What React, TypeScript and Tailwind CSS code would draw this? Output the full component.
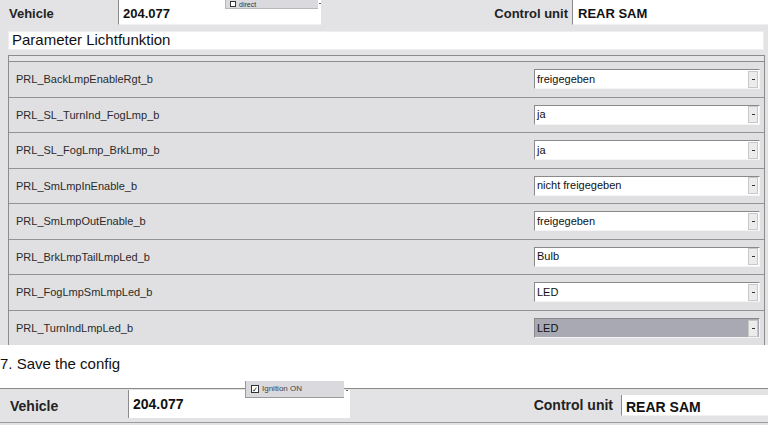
import React from "react";

const rows: { label: string; value: string; hl?: boolean }[] = [
  { label: "PRL_BackLmpEnableRgt_b", value: "freigegeben" },
  { label: "PRL_SL_TurnInd_FogLmp_b", value: "ja" },
  { label: "PRL_SL_FogLmp_BrkLmp_b", value: "ja" },
  { label: "PRL_SmLmpInEnable_b", value: "nicht freigegeben" },
  { label: "PRL_SmLmpOutEnable_b", value: "freigegeben" },
  { label: "PRL_BrkLmpTailLmpLed_b", value: "Bulb" },
  { label: "PRL_FogLmpSmLmpLed_b", value: "LED" },
  { label: "PRL_TurnIndLmpLed_b", value: "LED", hl: true },
];

function Select({ value, hl }: { value: string; hl?: boolean }) {
  return (
    <div
      className={`flex h-[20px] w-[226px] items-center border-t border-l border-t-[#8a8a8a] border-l-[#8a8a8a] border-b border-r border-b-[#f4f4f4] border-r-[#f4f4f4] ${
        hl ? "bg-[#a9a9b3]" : "bg-white"
      }`}
    >
      <span className="flex-1 truncate pl-[2px] text-[11px] leading-none text-[#111]">{value}</span>
      <div className="mr-[1px] flex h-[17px] w-[10px] items-center justify-center border border-[#c8c8c8] bg-[#ececec]">
        <div className="h-[1px] w-[3px] bg-[#333]" />
      </div>
    </div>
  );
}

export default function App() {
  return (
    <div
      className="relative h-[425px] w-[768px] overflow-hidden bg-white"
      style={{ fontFamily: '"Liberation Sans", Arial, sans-serif' }}
    >
      {/* Top screenshot panel */}
      <div className="relative h-[345px] overflow-hidden bg-[#e3e3e5]">
        {/* header */}
        <div className="relative flex h-[28px] items-start">
          <div className="flex h-[25px] w-[118px] items-center pl-[9px] pt-[2px] text-[13px] font-bold text-[#222]">
            Vehicle
          </div>
          <div className="flex h-[25px] w-[203px] items-start border-l border-b border-l-[#8a8a8a] border-b-[#f0f0f0] bg-white pl-[4px] pt-[4px] text-[13px] font-bold text-[#111]">
            204.077
          </div>
          <div className="flex-1" />
          <div className="flex h-[25px] items-center pr-[4px] pt-[2px] text-[13px] font-bold text-[#222]">
            Control unit
          </div>
          <div className="flex h-[25px] w-[196px] items-start border-l border-b border-l-[#8a8a8a] border-b-[#f0f0f0] bg-white pl-[5px] pt-[4px] text-[13px] font-bold text-[#111]">
            REAR SAM
          </div>
          {/* popup */}
          <div className="absolute left-[225px] top-0 flex h-[9px] w-[93px] items-center overflow-hidden border-b border-l border-[#b8b8b8] bg-[#dadade] pl-[4px]">
            <div className="flex items-center gap-[3px]">
              <div className="h-[6px] w-[6px] border border-[#333] bg-white" />
              <span className="text-[7px] leading-[7px] text-[#333]">direct</span>
            </div>
          </div>
          <div className="absolute left-[319px] top-[3px] h-[1px] w-[2px] bg-[#666]" />
        </div>

        {/* Parameter title */}
        <div className="ml-[8px] mr-[4px] mt-[3px] flex h-[19px] items-center border border-[#eeeeee] bg-white pl-[3px] text-[15px] text-[#111]">
          Parameter Lichtfunktion
        </div>

        {/* list */}
        <div className="ml-[8px] mr-[3px] mt-[5px] border border-[#8c8c8c]">
          <div className="h-[6px] border-b border-[#8c8c8c] bg-[#e6e6e8]" />
          {rows.map((r, i) => (
            <div
              key={r.label}
              className={`flex h-[35.5px] items-center bg-[#e0e0e2] pl-[7px] pr-[4px] ${
                i < rows.length - 1 ? "border-b border-[#939393]" : ""
              }`}
            >
              <span className="flex-1 text-[11px] text-[#2a2a2a]">{r.label}</span>
              <Select value={r.value} hl={r.hl} />
            </div>
          ))}
        </div>
      </div>

      {/* caption */}
      <div className="h-[43px] pt-[10px] text-[15px] leading-[17px] text-[#111]">7. Save the config</div>

      {/* second screenshot */}
      <div className="relative h-[37px] border-t border-[#8a8a8a] bg-[#e3e3e5]">
        <div className="flex h-[34px] items-start border-b border-[#9a9a9a]">
          <div className="flex h-[30px] w-[128px] items-center pl-[10px] pt-[4px] text-[14px] font-bold text-[#222]">
            Vehicle
          </div>
          <div className="mt-[1px] flex h-[28px] w-[222px] items-start border-l border-l-[#8a8a8a] bg-white pl-[4px] pt-[4px] text-[14px] font-bold text-[#111]">
            204.077
          </div>
          <div className="flex-1" />
          <div className="mt-[6px] flex h-[21px] items-center pr-[8px] text-[14px] font-bold text-[#222]">
            Control unit
          </div>
          <div className="mt-[6px] flex h-[21px] w-[147px] items-start border-l border-b border-l-[#8a8a8a] border-b-[#f0f0f0] bg-white pl-[4px] pt-[2px] text-[14px] font-bold text-[#111]">
            REAR SAM
          </div>
        </div>
      </div>
      {/* Ignition popup */}
      <div className="absolute left-[245px] top-[381px] flex h-[17px] w-[99px] items-center border-l border-b border-[#9a9a9a] bg-[#dadade] pl-[5px]">
        <div className="flex items-center gap-[3px]">
          <div className="flex h-[8px] w-[8px] items-center justify-center border border-[#333] bg-white text-[7px] leading-none text-[#111]">
            ✓
          </div>
          <span className="text-[8px] leading-none text-[#444]">Ignition ON</span>
        </div>
      </div>
      <div className="absolute left-[346px] top-[390px] h-[1px] w-[2px] bg-[#666]" />
    </div>
  );
}
